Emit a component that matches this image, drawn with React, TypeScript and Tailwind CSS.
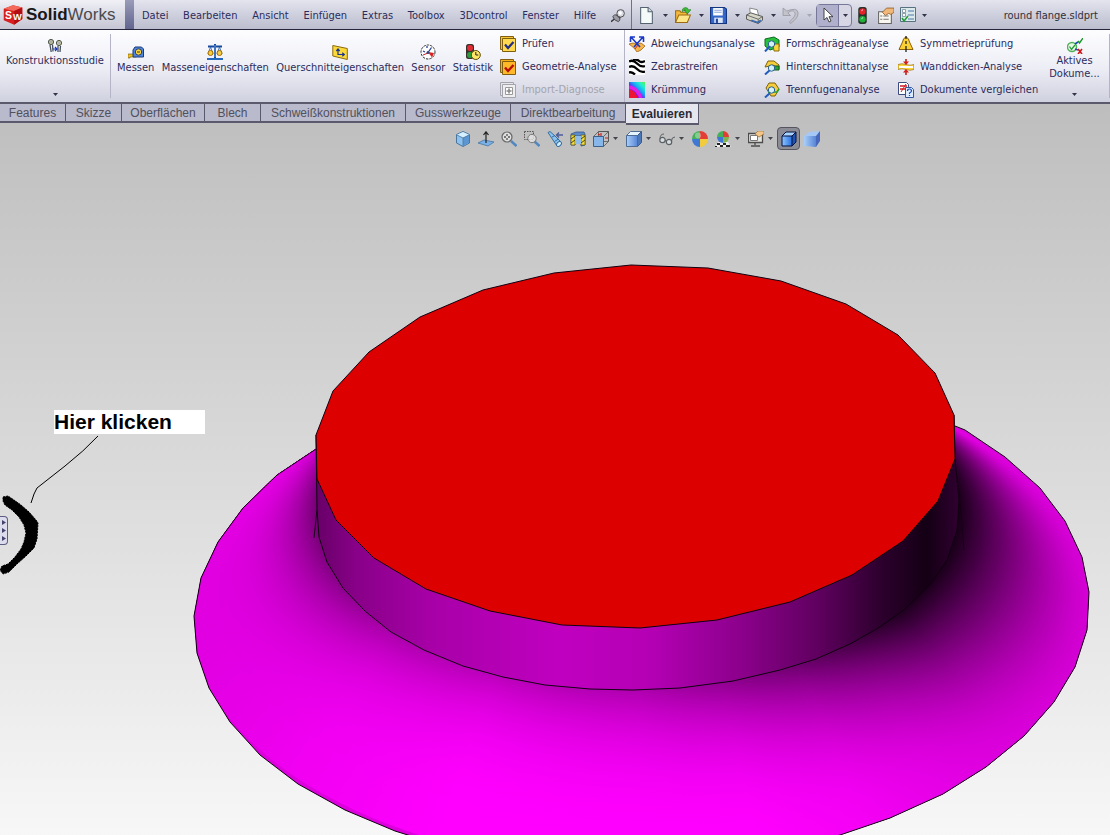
import type { ReactNode } from 'react';

const ICONS: Record<string, ReactNode> = {
  cube: (
    <>
      <path d="M1 4l8-3 8 2v10l-7 5-9-4z" fill="#d81e1e" />
      <path d="M1 4l8-3 8 2-7 3z" fill="#f36a5c" />
      <path d="M10 6l7-3v10l-7 5z" fill="#b30f12" />
    </>
  ),
  pin: (
    <>
      <path d="M0 14.500l5-4" stroke="#333" strokeWidth="1.600" />
      <path d="M2 8.500q2-3 5-1.500l3 3q1 3-1.500 4.500Q3 13 2 8.500z" fill="#9c9ca6" stroke="#444" />
      <path d="M7 6l4 4" stroke="#444" strokeWidth="3" />
      <circle cx="11" cy="5" r="4.300" fill="#d8d8e0" stroke="#444" />
      <circle cx="10.500" cy="4.500" r="2" fill="#fff" />
    </>
  ),
  newDoc: (
    <>
      <path d="M2.500.5h7l4 4v11h-11z" fill="#f4fafa" stroke="#566270" />
      <path d="M9.500.5v4h4" fill="#cfdde2" stroke="#566270" />
    </>
  ),
  open: (
    <>
      <path d="M1.500 14.500v-11h4l1 1.500h6v9z" fill="#f3b93a" stroke="#9c6b10" />
      <path d="M1.500 14.500l3-7h11l-3 7z" fill="#fde58a" stroke="#9c6b10" />
      <path d="M8 4.500Q7 1 11 .5q2 0 2.500 2H16l-3.500 4L9.500 3H11q-2-.5-3 1.500z" fill="#3fbf38" stroke="#187018" strokeWidth=".5" />
    </>
  ),
  save: (
    <>
      <path d="M.5.5h13l2 1.500v13.500H.5z" fill="#3567c8" stroke="#143580" />
      <path d="M3 1h9v7H3z" fill="#fff" />
      <path d="M4 3h7M4 5h7" stroke="#8aa6d8" />
      <path d="M4 10h8v5H4z" fill="#dbe6f6" />
      <path d="M5.500 11h2v4h-2z" fill="#24489c" />
    </>
  ),
  print: (
    <>
      <path d="M3.500 1l7 1.500 1.500 6-8-2z" fill="#fff" stroke="#777" strokeWidth=".8" />
      <path d="M.5 7.500l4-2 11 3.500v3.500l-4 3-11-4z" fill="#d6d6c8" stroke="#555" strokeWidth=".9" />
      <path d="M.5 7.500l11 4 4-2.500M11.500 11.500v4" stroke="#666" strokeWidth=".9" fill="none" />
      <path d="M5 12.500l6 2 3-2" stroke="#3b6ab5" fill="none" strokeWidth="1.500" />
    </>
  ),
  undo: <path d="M1 1v7h7L5.500 5.500Q10 2 12 5t-5 9l1 1.500Q16 10 15 5T4.500 3.800z" fill="#c3c3ca" stroke="#9a9aa4" strokeWidth=".8" />,
  cursor: <path d="M4 1v12l3-2.500 2 4.500 2-1-2-4.300h4z" fill="#fff" stroke="#333" strokeWidth=".9" />,
  traffic: (
    <>
      <rect x="4" y="0" width="8" height="16" rx="2.500" fill="#27322a" />
      <circle cx="8" cy="4.200" r="3" fill="#e4222a" />
      <circle cx="8" cy="11.500" r="3" fill="#20b03a" />
      <path d="M7 3.500l1.500-1M7 11l1.500-1" stroke="#fff" strokeWidth=".8" />
    </>
  ),
  options: (
    <>
      <path d="M1.500 4.500h12v11h-12z" fill="#f8f6ee" stroke="#666" />
      <path d="M3 8.500h2m1 0h5M3 11.500h2m1 0h5" stroke="#777" />
      <path d="M5 5l4-4h7v4l-3 2-2-1-3 2z" fill="#f0b878" stroke="#94602c" strokeWidth=".8" />
    </>
  ),
  list: (
    <>
      <path d="M.5.5h15v14H.5z" fill="#dce9ea" stroke="#56727e" />
      <path d="M8 4h6M8 8h6M8 12h6" stroke="#4b79a8" />
      <path d="M2.500 2.500h3v3h-3zM2.500 6.500h3v3h-3z" fill="#fff" stroke="#66808c" strokeWidth=".7" />
      <path d="M2 11l2 3 4-5" stroke="#1d9b35" strokeWidth="1.500" fill="none" />
    </>
  ),
  study: (
    <>
      <path d="M3 7l1.200 7M5.500 6.500l.5 7M11 8v6M13.500 8l-.5 6" stroke="#46505c" strokeWidth="1.300" />
      <circle cx="4" cy="4" r="2.600" fill="#c8ccaa" stroke="#4b5446" />
      <circle cx="12" cy="5" r="2.600" fill="#d4d8b2" stroke="#4b5446" />
      <circle cx="4" cy="4" r="1" fill="#fff" stroke="#555" strokeWidth=".5" />
      <circle cx="12" cy="5" r="1" fill="#fff" stroke="#555" strokeWidth=".5" />
      <path d="M6 11h4M8 9l2 2-2 2" stroke="#1736b8" strokeWidth="1.200" fill="none" />
    </>
  ),
  measure: (
    <>
      <path d="M0 10h8v3H2v1H0z" fill="#f2c21c" stroke="#6f5406" strokeWidth=".6" />
      <path d="M7 3h6.500L15.500 5v8H5V6z" fill="#4f86dc" stroke="#193a78" />
      <circle cx="10.500" cy="8" r="3.200" fill="#ffd83c" stroke="#243c6c" />
      <path d="M9 8h3" stroke="#333" />
    </>
  ),
  mass: (
    <>
      <path d="M8 0v14M1 2.500h14" stroke="#174a9c" strokeWidth="2" />
      <path d="M8 1v12" stroke="#7db7f4" strokeWidth=".8" />
      <path d="M0 15h16" stroke="#2468bd" strokeWidth="2" />
      <path d="M3.500 3L1 10M3.500 3L6 10M12.500 3L10 10M12.500 3L15 10" stroke="#3866ac" strokeWidth=".9" />
      <circle cx="3.500" cy="9" r="2.500" fill="#f7cd42" stroke="#a26b00" />
      <circle cx="12.500" cy="9" r="2.500" fill="#f7cd42" stroke="#a26b00" />
    </>
  ),
  section: (
    <>
      <path d="M.8 1.500l14.500 3v11L.8 12z" fill="#fbd93a" stroke="#8c6b0c" />
      <path d="M6 11V5.500M4.300 7L6 5l1.700 2M6 10.500h6M10.300 8.700l2 1.800-2 1.800" stroke="#1b3690" fill="none" strokeWidth="1.200" />
    </>
  ),
  sensor: (
    <>
      <circle cx="8" cy="8" r="7" fill="#fff" stroke="#333" strokeDasharray="2.500 1" />
      <path d="M8 8l6 1-2 4.500z" fill="#da2020" />
      <path d="M3 7l2 1M7 2v2M11.500 3.500L8 8.500" stroke="#253e96" strokeWidth="1.300" />
      <path d="M3 11l5-2" stroke="#c22" />
      <circle cx="8" cy="8.500" r="1.500" fill="#35487e" />
    </>
  ),
  stats: (
    <>
      <rect x="1" y="0" width="8" height="15" rx="2.500" fill="#37302b" />
      <circle cx="5" cy="4" r="3" fill="#e22c35" />
      <circle cx="5" cy="11" r="3" fill="#2b9c3d" />
      <circle cx="10.800" cy="11" r="4.500" fill="#ffe765" stroke="#5c4a08" />
      <path d="M10.800 8v3h2.500" stroke="#222" fill="none" />
    </>
  ),
  check: (
    <>
      <path d="M.5.5h13v13H.5z" fill="#f6c536" stroke="#806010" />
      <path d="M2.500 2.500h13v13h-13z" fill="#ffd94f" stroke="#806010" />
      <path d="M5 8.500l3 3.500 5.500-6" stroke="#232f84" strokeWidth="2.200" fill="none" />
    </>
  ),
  geometry: (
    <>
      <path d="M.5.5h13v13H.5z" fill="#f6b01c" stroke="#806010" />
      <path d="M2.500 2.500h13v13h-13z" fill="#ffb928" stroke="#806010" />
      <path d="M5 8.500l3 3.500 5.500-6" stroke="#b80f0c" strokeWidth="2.400" fill="none" />
    </>
  ),
  diagnose: (
    <>
      <path d="M.5.5h13v13H.5z" fill="#e6e6ea" stroke="#a4a4ac" />
      <path d="M2.500 2.500h13v13h-13z" fill="#eeeef0" stroke="#a4a4ac" />
      <path d="M5.500 5.500h7v7h-7z" fill="#fff" stroke="#999" />
      <path d="M9 6.500v5M6.500 9h5" stroke="#888" strokeWidth="1.600" />
    </>
  ),
  deviation: (
    <>
      <path d="M0 8l4-1 4 1 4-1 4 3-4 4-4 2-3-4z" fill="#f6b64a" stroke="#a3631c" strokeWidth=".8" />
      <path d="M2 1l9 10M14 1L5 11M1 1h5M1.500 1v5M15 1h-5M14.500 1v5" stroke="#1b38c4" strokeWidth="1.600" />
      <path d="M6 13l3-4" stroke="#d22" />
    </>
  ),
  zebra: (
    <>
      <path d="M0 0h16v16H0z" fill="#fff" />
      <path d="M0 2.500q4-2 8 2t8 2.500M0 8q4-2 8 2t8 2.500M4 1q4-1 6 1t6 0M0 13.500q3-1 6 2" stroke="#000" strokeWidth="2.400" fill="none" />
    </>
  ),
  curvature: (
    <>
      <path d="M0 0h16v16H0z" fill="url(#rainbow)" />
      <path d="M0 7q6 1 9 9H0z" fill="#ef1432" />
      <path d="M0 5q8 1 12 11" stroke="#e41ee6" strokeWidth="3.500" fill="none" />
    </>
  ),
  draft: (
    <>
      <path d="M1 3l9-2 5 3v7l-9 3-5-4z" fill="#29bf3e" stroke="#0b6a1e" />
      <path d="M9 8h6v7h-5z" fill="#fbd53c" stroke="#8a690c" />
      <path d="M1 15.500L6 10" stroke="#205cc0" strokeWidth="2" />
      <circle cx="7.500" cy="8" r="3.200" fill="#d3f2f8" stroke="#285c8e" />
    </>
  ),
  undercut: (
    <>
      <path d="M1 8l3-6h6l5 4v4h-3V8l-3-2-3 1z" fill="#f6ce3b" stroke="#7c6008" />
      <path d="M10 7h5v4h-5z" fill="#26a436" stroke="#0e5a1a" />
      <path d="M1 15.500L6 11" stroke="#205cc0" strokeWidth="2" />
      <circle cx="7.500" cy="9" r="3.200" fill="#d3f2f8" stroke="#285c8e" />
    </>
  ),
  parting: (
    <>
      <path d="M2 6l3-5h6l4 6-4 7H7z" fill="#f6ce3b" stroke="#7c6008" />
      <path d="M4 10h9l2-3" stroke="#1ea53a" strokeWidth="1.600" fill="none" />
      <path d="M1 15.500L6 11" stroke="#205cc0" strokeWidth="2" />
      <circle cx="7.500" cy="8" r="3.200" fill="#d3f2f8" stroke="#285c8e" />
    </>
  ),
  symmetry: (
    <>
      <path d="M8 1q-3 1-3.500 5L1 13.500h14L11.500 6Q11 2 8 1z" fill="#fbd035" stroke="#8e5e08" />
      <path d="M8 0v3M8 5v3M8 10v6" stroke="#222" strokeWidth="1.300" />
    </>
  ),
  thickness: (
    <>
      <path d="M0 5.500q4-1.500 8 0t8 0v5q-4 1.500-8 0t-8 0z" fill="#fbd53c" stroke="#9c7410" strokeWidth=".7" />
      <path d="M1 8h14" stroke="#fff" strokeWidth="2" />
      <path d="M8 0v4M8 16v-4" stroke="#b51a12" strokeWidth="1.500" />
      <path d="M5 2.500h6L8 6zM5 13.500h6L8 10z" fill="#d6201a" />
    </>
  ),
  compare: (
    <>
      <path d="M.5.5h8l2 2v10H.5z" fill="#fff" stroke="#3a4d80" />
      <path d="M2 4h7M2 7h7" stroke="#d01820" strokeWidth="1.500" />
      <path d="M3 10l5-8" stroke="#d01820" />
      <path d="M7.500 5.500h6l2 2v8h-8z" fill="#dcecff" stroke="#31569c" />
      <path d="M9.500 9q0-2 2-2t2 2q0 1-2 2v1m0 1v1" stroke="#1846b8" strokeWidth="1.200" fill="none" />
    </>
  ),
  active: (
    <>
      <circle cx="5" cy="9" r="4.500" fill="#e5f7e5" stroke="#52b058" strokeWidth="1.400" />
      <path d="M2.500 8.500l2 3L8 7" stroke="#259a36" strokeWidth="1.300" fill="none" />
      <path d="M11 3l1.500 2L16 0" stroke="#189828" strokeWidth="1.400" fill="none" />
      <path d="M8 6l3-2M8 11l3 1" stroke="#2144ba" strokeWidth="1.600" />
      <path d="M11 11l4 5M15 11l-4 5" stroke="#d01818" strokeWidth="1.600" />
    </>
  ),
  isoCube: (
    <>
      <path d="M8 .5l6.500 3v8.500L8 15.500 1.500 12V3.500z" fill="#8cc0ee" stroke="#49769f" />
      <path d="M2 3.800l6-2.800 6 2.800-6 3z" fill="#d6efff" />
      <path d="M8 7l6-3v7.700L8 15z" fill="#5b96d2" />
      <path d="M2 4l6 3 6-3M8 7v8" stroke="#49769f" fill="none" strokeWidth=".8" />
    </>
  ),
  normalTo: (
    <>
      <path d="M0 12l6-3 10 2-6 4z" fill="#7bb1e6" stroke="#4875a4" strokeWidth=".8" />
      <path d="M8 12V2M5.500 4L8 .8 10.500 4" stroke="#222" fill="none" strokeWidth="1.200" />
    </>
  ),
  zoomFit: (
    <>
      <path d="M10 10l5.500 5" stroke="#5387c0" strokeWidth="2.500" />
      <circle cx="6" cy="6" r="5" fill="#dedede" stroke="#666" strokeWidth="1.200" />
      <path d="M6 3v6M3 6h6" stroke="#555" strokeWidth="1.300" strokeDasharray="2" />
    </>
  ),
  zoomArea: (
    <>
      <path d="M10 10l5.500 5" stroke="#5387c0" strokeWidth="2.500" />
      <path d="M.5.5h9v8h-9z" fill="none" stroke="#555" strokeDasharray="1.500 1" />
      <circle cx="8" cy="7.500" r="4.200" fill="#e4e4e4" fillOpacity=".8" stroke="#777" />
    </>
  ),
  prevView: (
    <>
      <path d="M1 1.500l2-1 5 4.500 6 6q0 4-4 4l-4-6z" fill="#89c4ee" stroke="#3a6da0" />
      <path d="M5 6l3-1.500M7.500 10.500l4-2.500" stroke="#3a6da0" />
      <ellipse cx="12" cy="13" rx="2.800" ry="2" transform="rotate(-45 12 13)" fill="#d4f0ff" stroke="#3a6da0" />
      <path d="M16 4H10M12 1.500L9.500 4 12 6.500" stroke="#4d5c9a" fill="none" strokeWidth="1.400" />
    </>
  ),
  sectionView: (
    <>
      <path d="M1 3l5-2h8l1 2v11l-4 1V5H5v9H1z" fill="#5c8bc8" stroke="#35578a" strokeWidth=".8" />
      <path d="M1 4h4v10H1zM11 4h4v10h-4z" fill="#f4dc3c" stroke="#5a5216" strokeWidth=".7" />
      <path d="M1 8l4-3M1 12l4-3M11 8l4-3M11 12l4-3" stroke="#46420e" />
      <path d="M5 5h6v8H5z" fill="#8fbce8" />
    </>
  ),
  orientation: (
    <>
      <path d="M5.500.5h10v10" fill="none" stroke="#555" />
      <path d="M.5 5.500h10v10H.5z" fill="#87b7ea" stroke="#3d618e" />
      <path d="M.5 5.500l5-5M10.500 5.500l5-5M10.500 15.500l5-5M5.500.5v5M10.500 10.500h5" stroke="#555" strokeWidth=".8" />
      <path d="M8 2v3M12 7h3M5 3l2 1" stroke="#c22" strokeWidth="1.200" />
    </>
  ),
  display: (
    <>
      <path d="M.5 4.500l4-4h11l-4 4z" fill="#e4f3ff" stroke="#4e6b94" />
      <path d="M11.500 4.500l4-4v11l-4 4z" fill="#4977b8" stroke="#3c5c90" />
      <path d="M.5 4.500h11v11H.5z" fill="url(#face)" stroke="#4e6b94" />
    </>
  ),
  glasses: (
    <>
      <circle cx="3.500" cy="9" r="2.700" fill="#d6dcdf" stroke="#5a6063" strokeWidth="1.200" />
      <circle cx="10" cy="11" r="2.700" fill="#d6dcdf" stroke="#5a6063" strokeWidth="1.200" />
      <path d="M1 8q0-5 4-5M6 9.500l1.500.5M12.500 10q0-4 3.500-4" stroke="#5a6063" fill="none" />
    </>
  ),
  sphere: (
    <>
      <path d="M8 8V0a8 8 0 0 0-8 8z" fill="#45b058" />
      <path d="M8 8V0a8 8 0 0 1 8 8z" fill="#e23e36" />
      <path d="M8 8H0a8 8 0 0 0 8 8z" fill="#3f77d4" />
      <path d="M8 8h8a8 8 0 0 1-8 8z" fill="#f2cc3c" />
      <circle cx="6" cy="4.500" r="3" fill="#fff" fillOpacity=".35" />
    </>
  ),
  scene: (
    <>
      <path d="M0 16l3-5h10l3 5z" fill="#f0f0f0" />
      <path d="M2 12h3v2H2zM8 12h3v2H8zM5 14h3v2H5zM11 14h4v2h-4zM0 15h2v1H0z" fill="#222" />
      <path d="M8 6V0a6 6 0 0 0-6 6z" fill="#45b058" />
      <path d="M8 6V0a6 6 0 0 1 6 6z" fill="#e23e36" />
      <path d="M8 6H2a6 6 0 0 0 6 6z" fill="#3f77d4" />
      <path d="M8 6h6a6 6 0 0 1-6 6z" fill="#7fb34c" />
    </>
  ),
  viewSettings: (
    <>
      <path d="M.5 2.500h14v9H.5z" fill="#e4e4de" stroke="#4c4c4c" strokeWidth="1.300" />
      <path d="M2.500 4.500h7v5h-7z" fill="#fff" stroke="#777" />
      <path d="M7 12v2M3 15h9" stroke="#4c4c4c" strokeWidth="1.300" />
      <path d="M7 3l3-3h6v3l-5 3z" fill="#f3c688" stroke="#9a6c34" strokeWidth=".7" />
    </>
  ),
  shadedEdges: (
    <>
      <path d="M1 5l4-4h10l-4 4z" fill="#a8d2ff" />
      <path d="M11 5l4-4v10l-4 4z" fill="#1f54b4" />
      <path d="M1 5h10v10H1z" fill="url(#faceStrong)" />
      <path d="M1 5h10v10H1zM1 5l4-4h10l-4 4M15 1v10l-4 4" fill="none" stroke="#06103c" />
    </>
  ),
  shaded: (
    <>
      <path d="M0 5l5-4 11-1-4 5z" fill="#a5c8f6" />
      <path d="M12 5l4-5v10l-4 6z" fill="#4668bc" />
      <path d="M0 5h12v11l-12-1z" fill="url(#face)" />
    </>
  ),
};

function Icon({ name, className = 'size-4' }: { name: string; className?: string }) {
  return (
    <svg viewBox="0 0 16 16" fill="none" aria-hidden="true" className={`block shrink-0 ${className}`}>
      {ICONS[name]}
    </svg>
  );
}

function Caret({ className = 'text-[#33334a]' }: { className?: string }) {
  return (
    <svg width="5" height="3" viewBox="0 0 5 3" aria-hidden="true" className={`shrink-0 ${className}`}>
      <path d="M0 0h5L2.500 3z" fill="currentColor" />
    </svg>
  );
}

const MENU = ['Datei', 'Bearbeiten', 'Ansicht', 'Einfügen', 'Extras', 'Toolbox', '3Dcontrol', 'Fenster', 'Hilfe'];

const QUICK_ACCESS = [
  { icon: 'newDoc', label: 'Neu' },
  { icon: 'open', label: 'Öffnen' },
  { icon: 'save', label: 'Speichern' },
  { icon: 'print', label: 'Drucken' },
  { icon: 'undo', label: 'Rückgängig', disabled: true },
];

const LARGE_TOOLS = [
  { icon: 'measure', label: 'Messen' },
  { icon: 'mass', label: 'Masseneigenschaften' },
  { icon: 'section', label: 'Querschnitteigenschaften' },
  { icon: 'sensor', label: 'Sensor' },
  { icon: 'stats', label: 'Statistik' },
];

const TOOL_COLUMNS = [
  {
    width: 'w-[125px] border-r border-[#b4b4c6]',
    items: [
      { icon: 'check', label: 'Prüfen' },
      { icon: 'geometry', label: 'Geometrie-Analyse' },
      { icon: 'diagnose', label: 'Import-Diagnose', disabled: true },
    ],
  },
  {
    width: 'w-[135px] pl-1',
    items: [
      { icon: 'deviation', label: 'Abweichungsanalyse' },
      { icon: 'zebra', label: 'Zebrastreifen' },
      { icon: 'curvature', label: 'Krümmung' },
    ],
  },
  {
    width: 'w-[134px] pl-1',
    items: [
      { icon: 'draft', label: 'Formschrägeanalyse' },
      { icon: 'undercut', label: 'Hinterschnittanalyse' },
      { icon: 'parting', label: 'Trennfugenanalyse' },
    ],
  },
  {
    width: 'w-[145px] pl-1',
    items: [
      { icon: 'symmetry', label: 'Symmetrieprüfung' },
      { icon: 'thickness', label: 'Wanddicken-Analyse' },
      { icon: 'compare', label: 'Dokumente vergleichen' },
    ],
  },
];

const TABS = [
  { label: 'Features', width: 'w-[66px]' },
  { label: 'Skizze', width: 'w-14' },
  { label: 'Oberflächen', width: 'w-[83px]' },
  { label: 'Blech', width: 'w-14' },
  { label: 'Schweißkonstruktionen', width: 'w-[145px]' },
  { label: 'Gusswerkzeuge', width: 'w-[105px]' },
  { label: 'Direktbearbeitung', width: 'w-[115px]' },
  { label: 'Evaluieren', width: 'w-[73px]', active: true },
];

const VIEW_TOOLS = [
  { icon: 'isoCube', label: 'Isometrisch' },
  { icon: 'normalTo', label: 'Normal auf' },
  { icon: 'zoomFit', label: 'In Fenster zoomen' },
  { icon: 'zoomArea', label: 'Ausschnitt vergrößern' },
  { icon: 'prevView', label: 'Vorherige Ansicht' },
  { icon: 'sectionView', label: 'Schnittansicht' },
  { icon: 'orientation', label: 'Ansichtsausrichtung', menu: true },
  { icon: 'display', label: 'Anzeigeart', menu: true },
  { icon: 'glasses', label: 'Ausblenden', menu: true },
  { icon: 'sphere', label: 'Erscheinungsbild' },
  { icon: 'scene', label: 'Bühne', menu: true },
  { icon: 'viewSettings', label: 'Ansichtseinstellungen', menu: true },
  { icon: 'shadedEdges', label: 'Schattiert mit Kanten', active: true },
  { icon: 'shaded', label: 'Schattiert' },
];

const FLANGE =
  '316,449 277,475 243,508 218,542 201,578 194,616 197,653 209,688 230,722 260,755 298,784 345,810 395,831 440,845 800,845 840,835 890,818 943,794 986,767 1024,736 1054,702 1075,667 1087,630 1089,592 1082,557 1065,521 1040,488 1005,457 965,430 955,426 640,400';
const WALL =
  '316,435 317,510 319,537 327,562 343,588 365,611 391,632 424,650 463,666 503,677 545,685 590,689 633,690 680,688 733,681 780,670 816,659 850,644 880,627 905,609 930,585 947,560 957,530 959,500 955,459 954,415';
const TOP =
  '631,265 708,268 781,281 846,304 898,335 935,373 954,415 955,459 938,501 903,541 852,575 790,602 717,620 640,628 562,625 490,611 426,589 374,558 336,520 317,479 316,435 333,391 369,352 420,317 483,290 554,273';

// Brightness across the fillet: at the wall, at the rim, and how fast it rises between them
const SHADES = [
  { at: 0, wall: 112, rim: 224, falloff: 3.5 },
  { at: 0.12, wall: 160, rim: 242, falloff: 3.5 },
  { at: 0.28, wall: 180, rim: 255, falloff: 3.5 },
  { at: 0.5, wall: 172, rim: 255, falloff: 3 },
  { at: 0.63, wall: 144, rim: 255, falloff: 2.8 },
  { at: 0.75, wall: 108, rim: 245, falloff: 2.5 },
  { at: 0.84, wall: 64, rim: 230, falloff: 2.3 },
  { at: 0.91, wall: 30, rim: 220, falloff: 1.9 },
  { at: 1, wall: 22, rim: 214, falloff: 1.4 },
];

const RING_COUNT = 80;
const RINGS = Array.from({ length: RING_COUNT + 1 }, (_, i) => {
  const u = 1 - i / RING_COUNT;
  return {
    id: `ring${i}`,
    cx: 638 + 3 * u,
    cy: 510 + 102 * u,
    rx: 321 + 131 * u,
    ry: 179 + 77 * u,
    stops: SHADES.map(({ at, wall, rim, falloff }) => {
      const level = Math.round(rim - (rim - wall) * Math.pow(1 - u, falloff));
      return { at, color: `rgb(${level},0,${level})` };
    }),
  };
});

function Model() {
  return (
    <svg viewBox="0 104 1110 731" preserveAspectRatio="xMidYMin slice" className="absolute inset-0 size-full" role="img" aria-label="round flange">
      <defs>
        <linearGradient id="rainbow" x1="0" y1="1" x2="1" y2="0">
          <stop offset=".4" stopColor="#6020f0" />
          <stop offset=".6" stopColor="#18a8f8" />
          <stop offset=".8" stopColor="#20f0d0" />
          <stop offset="1" stopColor="#60f040" />
        </linearGradient>
        <linearGradient id="face">
          <stop offset="0" stopColor="#a9cffa" />
          <stop offset="1" stopColor="#5784d6" />
        </linearGradient>
        <linearGradient id="faceStrong">
          <stop offset="0" stopColor="#8cc6ff" />
          <stop offset="1" stopColor="#2a6fe0" />
        </linearGradient>
        <linearGradient id="wall" gradientUnits="userSpaceOnUse" x1="317" y1="0" x2="959" y2="0">
          <stop offset="0" stopColor="#680068" />
          <stop offset=".06" stopColor="#880088" />
          <stop offset=".18" stopColor="#a800a8" />
          <stop offset=".38" stopColor="#c000c0" />
          <stop offset=".52" stopColor="#b400b4" />
          <stop offset=".66" stopColor="#8c008c" />
          <stop offset=".78" stopColor="#600060" />
          <stop offset=".88" stopColor="#2c002c" />
          <stop offset=".95" stopColor="#140014" />
          <stop offset="1" stopColor="#300030" />
        </linearGradient>
        {RINGS.map(({ id, stops }) => (
          <linearGradient key={id} id={id}>
            {stops.map(({ at, color }) => (
              <stop key={at} offset={at} stopColor={color} />
            ))}
          </linearGradient>
        ))}
        <clipPath id="flangeClip">
          <polygon points={FLANGE} />
        </clipPath>
      </defs>

      {/* Flange, shaded ring by ring from the rim to the wall */}
      <polygon points={FLANGE} fill="#dc00dc" />
      <g clipPath="url(#flangeClip)">
        {RINGS.map(({ id, cx, cy, rx, ry }) => (
          <ellipse key={id} cx={cx} cy={cy} rx={rx} ry={ry} fill={`url(#${id})`} />
        ))}
      </g>
      <polygon points={FLANGE} fill="none" stroke="#100010" />

      <polygon points={WALL} fill="url(#wall)" stroke="#100010" />
      <polygon points={TOP} fill="#dd0000" stroke="#100010" />
      <path d="M317 510l-3 28M959 490l5 60M957 480l5 40" stroke="#180018" fill="none" />

      {/* Hand-drawn marker */}
      <path d="M98 436q-14 15-33 30l-28 22-3 6-3 9" stroke="#000" fill="none" />
      <path
        d="M3 497l5-1 6 4 7 5 8 7 7 8 2 3-1 16-3 9-8 8-9 8-8 8-6 2-3-4 2-4 6-2 7-7 6-8 3-7 2-9-2-8-5-8-7-7-7-5-2-4z"
        fill="#000"
        stroke="#000"
        strokeDasharray="2 1"
      />
    </svg>
  );
}

export default function App() {
  return (
    <div className="flex min-h-screen flex-col overflow-hidden font-['DejaVu_Sans_Condensed','Noto_Sans',sans-serif] text-[11px] leading-[13px] text-[#2c2c5c]">
      <header className="flex h-[30px] items-center border-b border-[#26263a] bg-linear-to-b from-[#e4e4ee] via-[#cfd0de] to-[#bcbdce]">
        <div className="flex h-full w-[125px] items-center bg-linear-to-b from-[#f0f0f6] to-[#c6c6d4] pl-0.5">
          <svg viewBox="0 0 18 19" className="h-[22px] w-[22px] shrink-0" aria-hidden="true">
            {ICONS.cube}
            <text x="2" y="13" fontSize="9" fontWeight="bold" fontFamily="Liberation Sans" fill="#fff">S</text>
            <text x="9" y="14" fontSize="8" fontWeight="bold" fontFamily="Liberation Sans" fill="#fff">W</text>
          </svg>
          <span className="ml-0.5 font-['Liberation_Sans',sans-serif] text-[17px] leading-5 text-[#4a4a4e]">
            <b className="text-[#18181a]">Solid</b>Works
          </span>
        </div>
        <div className="h-full w-[9px] bg-linear-to-b from-[#9a9cb8] to-[#62658e]" />
        <nav className="flex h-full w-[498px] items-center justify-between border-r border-[#70708a] pt-0.5 pr-1.5 pl-2">
          {MENU.map((item) => (
            <button key={item} type="button">
              {item}
            </button>
          ))}
          <button type="button" aria-label="Anheften">
            <Icon name="pin" className="size-3.5" />
          </button>
        </nav>
        <div className="flex items-center pt-px pl-1">
          {QUICK_ACCESS.map(({ icon, label, disabled }) => (
            <button key={icon} type="button" aria-label={label} disabled={disabled} className="flex w-9 items-center gap-2 pl-0.5">
              <Icon name={icon} className="size-[17px]" />
              <Caret className={disabled ? 'text-[#a6a6b2]' : 'text-[#33334a]'} />
            </button>
          ))}
          <button type="button" aria-label="Auswählen" className="flex h-[23px] w-9 items-center rounded-sm border border-[#77779a] bg-[#d6d6e4]">
            <span className="flex h-full w-[22px] items-center justify-center border-r border-[#77779a] bg-[#b0b0cc]">
              <Icon name="cursor" />
            </span>
            <span className="flex flex-1 justify-center">
              <Caret />
            </span>
          </button>
          <button type="button" aria-label="Modellneuaufbau" className="ml-0.5">
            <Icon name="traffic" className="size-[17px]" />
          </button>
          <button type="button" aria-label="Dateieigenschaften" className="ml-1.5">
            <Icon name="options" className="size-[17px]" />
          </button>
          <button type="button" aria-label="Optionen" className="ml-1.5 flex items-center gap-1.5">
            <Icon name="list" />
            <Caret />
          </button>
        </div>
        <span className="ml-auto pt-0.5 pr-3 text-[#30303c]">round flange.sldprt</span>
      </header>

      <section aria-label="Evaluieren" className="flex h-[74px] border-b-2 border-[#5a5a6c] bg-linear-to-b from-[#fdfdff] via-[#eeeff6] to-[#d0d1df]">
        <button type="button" className="my-1 flex w-[111px] flex-col items-center border-r border-[#b4b4c6] pt-1">
          <Icon name="study" />
          <span>Konstruktionsstudie</span>
          <span className="mt-auto flex pb-0.5">
            <Caret />
          </span>
        </button>
        <div className="flex w-[389px] items-start justify-between pt-3.5 pr-[7px] pl-1.5">
          {LARGE_TOOLS.map(({ icon, label }) => (
            <button key={icon} type="button" className="flex flex-col items-center gap-px">
              <Icon name={icon} />
              {label}
            </button>
          ))}
        </div>
        {TOOL_COLUMNS.map(({ width, items }) => (
          <div key={width} className={`flex flex-col pt-0.5 ${width}`}>
            {items.map(({ icon, label, disabled }) => (
              <button
                key={icon}
                type="button"
                disabled={disabled}
                className="flex h-[23px] items-center gap-1.5 whitespace-nowrap disabled:text-[#a4a4ac]"
              >
                <Icon name={icon} />
                {label}
              </button>
            ))}
          </div>
        ))}
        <button type="button" className="my-1 ml-auto flex w-[70px] flex-col items-center border-r border-[#b4b4c6] pt-1">
          <Icon name="active" />
          <span>Aktives</span>
          <span>Dokume...</span>
          <span className="mt-auto flex pb-0.5">
            <Caret />
          </span>
        </button>
      </section>

      <main className="relative flex-1 bg-linear-to-b from-[#bebebe] to-[#f7f7f7]">
        <Model />

        <nav className="relative flex items-start font-['Liberation_Sans',sans-serif] text-xs text-[#50505e]">
          {TABS.map(({ label, width, active }) => (
            <button
              key={label}
              type="button"
              className={`border-r border-b-2 border-[#5a5a6c] ${width} ${
                active ? 'h-[21px] bg-[#e6e6ee] font-bold text-[#2a2a34]' : 'h-[19px] bg-[#b9bacb]'
              }`}
            >
              {label}
            </button>
          ))}
        </nav>

        <div role="toolbar" aria-label="Ansicht" className="relative flex items-center pt-0.5 pl-[451px]">
          {VIEW_TOOLS.map(({ icon, label, menu, active }) => (
            <button
              key={icon}
              type="button"
              aria-label={label}
              className={`flex h-[23px] items-center ${menu ? 'w-[33px] gap-1 pl-1' : 'w-[23px] justify-center'} ${
                active ? 'rounded-sm border border-[#55555f] bg-[#8c8c96]' : ''
              }`}
            >
              <Icon name={icon} />
              {menu && <Caret className="text-[#44444c]" />}
            </button>
          ))}
        </div>

        <p className="absolute top-[306px] left-[54px] h-6 w-[151px] bg-white font-['Liberation_Sans',sans-serif] text-[21px] leading-6 font-bold text-black">
          Hier klicken
        </p>

        <button
          type="button"
          aria-label="FeatureManager einblenden"
          className="absolute top-[412px] left-0 flex h-[29px] w-2 flex-col items-center justify-around rounded-r-sm border border-l-0 border-[#5c5c80] bg-[#dcdcec] py-0.5"
        >
          {[0, 1, 2].map((i) => (
            <svg key={i} width="4" height="5" viewBox="0 0 4 5" aria-hidden="true">
              <path d="M0 0l4 2.500L0 5z" fill="#44446c" />
            </svg>
          ))}
        </button>
      </main>
    </div>
  );
}
